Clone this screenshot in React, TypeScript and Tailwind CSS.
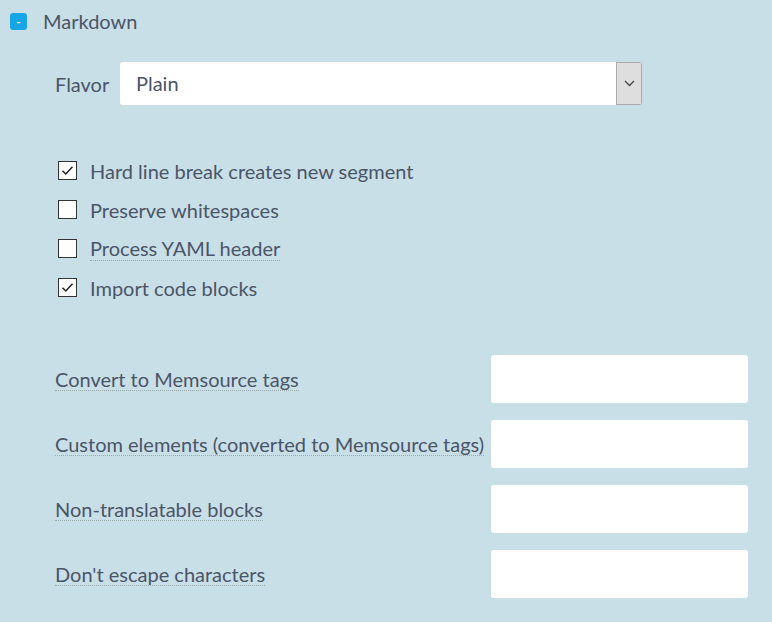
import React, { useState } from 'react';

const CHECKS = [
  { label: 'Hard line break creates new segment', checked: true, hint: false },
  { label: 'Preserve whitespaces', checked: false, hint: false },
  { label: 'Process YAML header', checked: false, hint: true },
  { label: 'Import code blocks', checked: true, hint: false },
];

const FIELDS = [
  'Convert to Memsource tags',
  'Custom elements (converted to Memsource tags)',
  'Non-translatable blocks',
  "Don't escape characters",
];

const Check: React.FC<{ label: string; checked: boolean; hint: boolean }> = ({ label, checked, hint }) => {
  const [on, setOn] = useState(checked);
  return (
    <label className="flex items-center h-[39px] cursor-pointer" onClick={() => setOn(!on)}>
      <span className="w-[19px] h-[19px] border border-[#333] bg-white flex items-center justify-center ml-[3px]">
        {on && (
          <svg width="13" height="11" viewBox="0 0 13 11" fill="none">
            <path d="M1.5 5.8 L4.8 9 L11.5 1.8" stroke="#222" strokeWidth="1.5" />
          </svg>
        )}
      </span>
      <span className={`ml-[13px] leading-[24px] ${hint ? 'border-b border-dotted border-[#9aa]' : ''}`}>{label}</span>
    </label>
  );
};

export default function App() {
  return (
    <div className="w-[772px] h-[622px] bg-[#c9dfe7] text-[#4a5568] text-[20px] overflow-hidden" style={{ fontFamily: 'Lato, "Open Sans", sans-serif' }}>
      <div className="flex items-center pt-[13px] pl-[10px] h-[30px]">
        <span className="w-[17px] h-[17px] rounded-[3px] bg-[#16a5e6] text-white text-[12px] leading-[17px] flex items-center justify-center font-bold">-</span>
        <span className="ml-[16px] leading-[17px]">Markdown</span>
      </div>

      <div className="pl-[55px]">
        <div className="flex items-center mt-[32px] h-[43px]">
          <span className="w-[65px]">Flavor</span>
          <div className="flex w-[522px] h-[43px] bg-white rounded-[3px] overflow-hidden">
            <span className="flex-1 pl-[16px] leading-[43px]">Plain</span>
            <span className="w-[26px] h-[43px] bg-[#dedede] border border-[#aaa] flex items-center justify-center">
              <svg width="11" height="7" viewBox="0 0 11 7" fill="none">
                <path d="M1 1 L5.5 5.5 L10 1" stroke="#444" strokeWidth="1.3" />
              </svg>
            </span>
          </div>
        </div>

        <div className="flex flex-col mt-[46px]">
          {CHECKS.map((c) => (
            <Check key={c.label} {...c} />
          ))}
        </div>

        <div className="grid grid-cols-[436px_257px] gap-y-[17px] mt-[48px]">
          {FIELDS.map((f) => (
            <React.Fragment key={f}>
              <div className="flex items-center h-[48px]">
                <span className="border-b border-dotted border-[#9aa] leading-[22px] pt-[1px]">{f}</span>
              </div>
              <input className="h-[48px] bg-white rounded-[3px] outline-none" />
            </React.Fragment>
          ))}
        </div>
      </div>
    </div>
  );
}
